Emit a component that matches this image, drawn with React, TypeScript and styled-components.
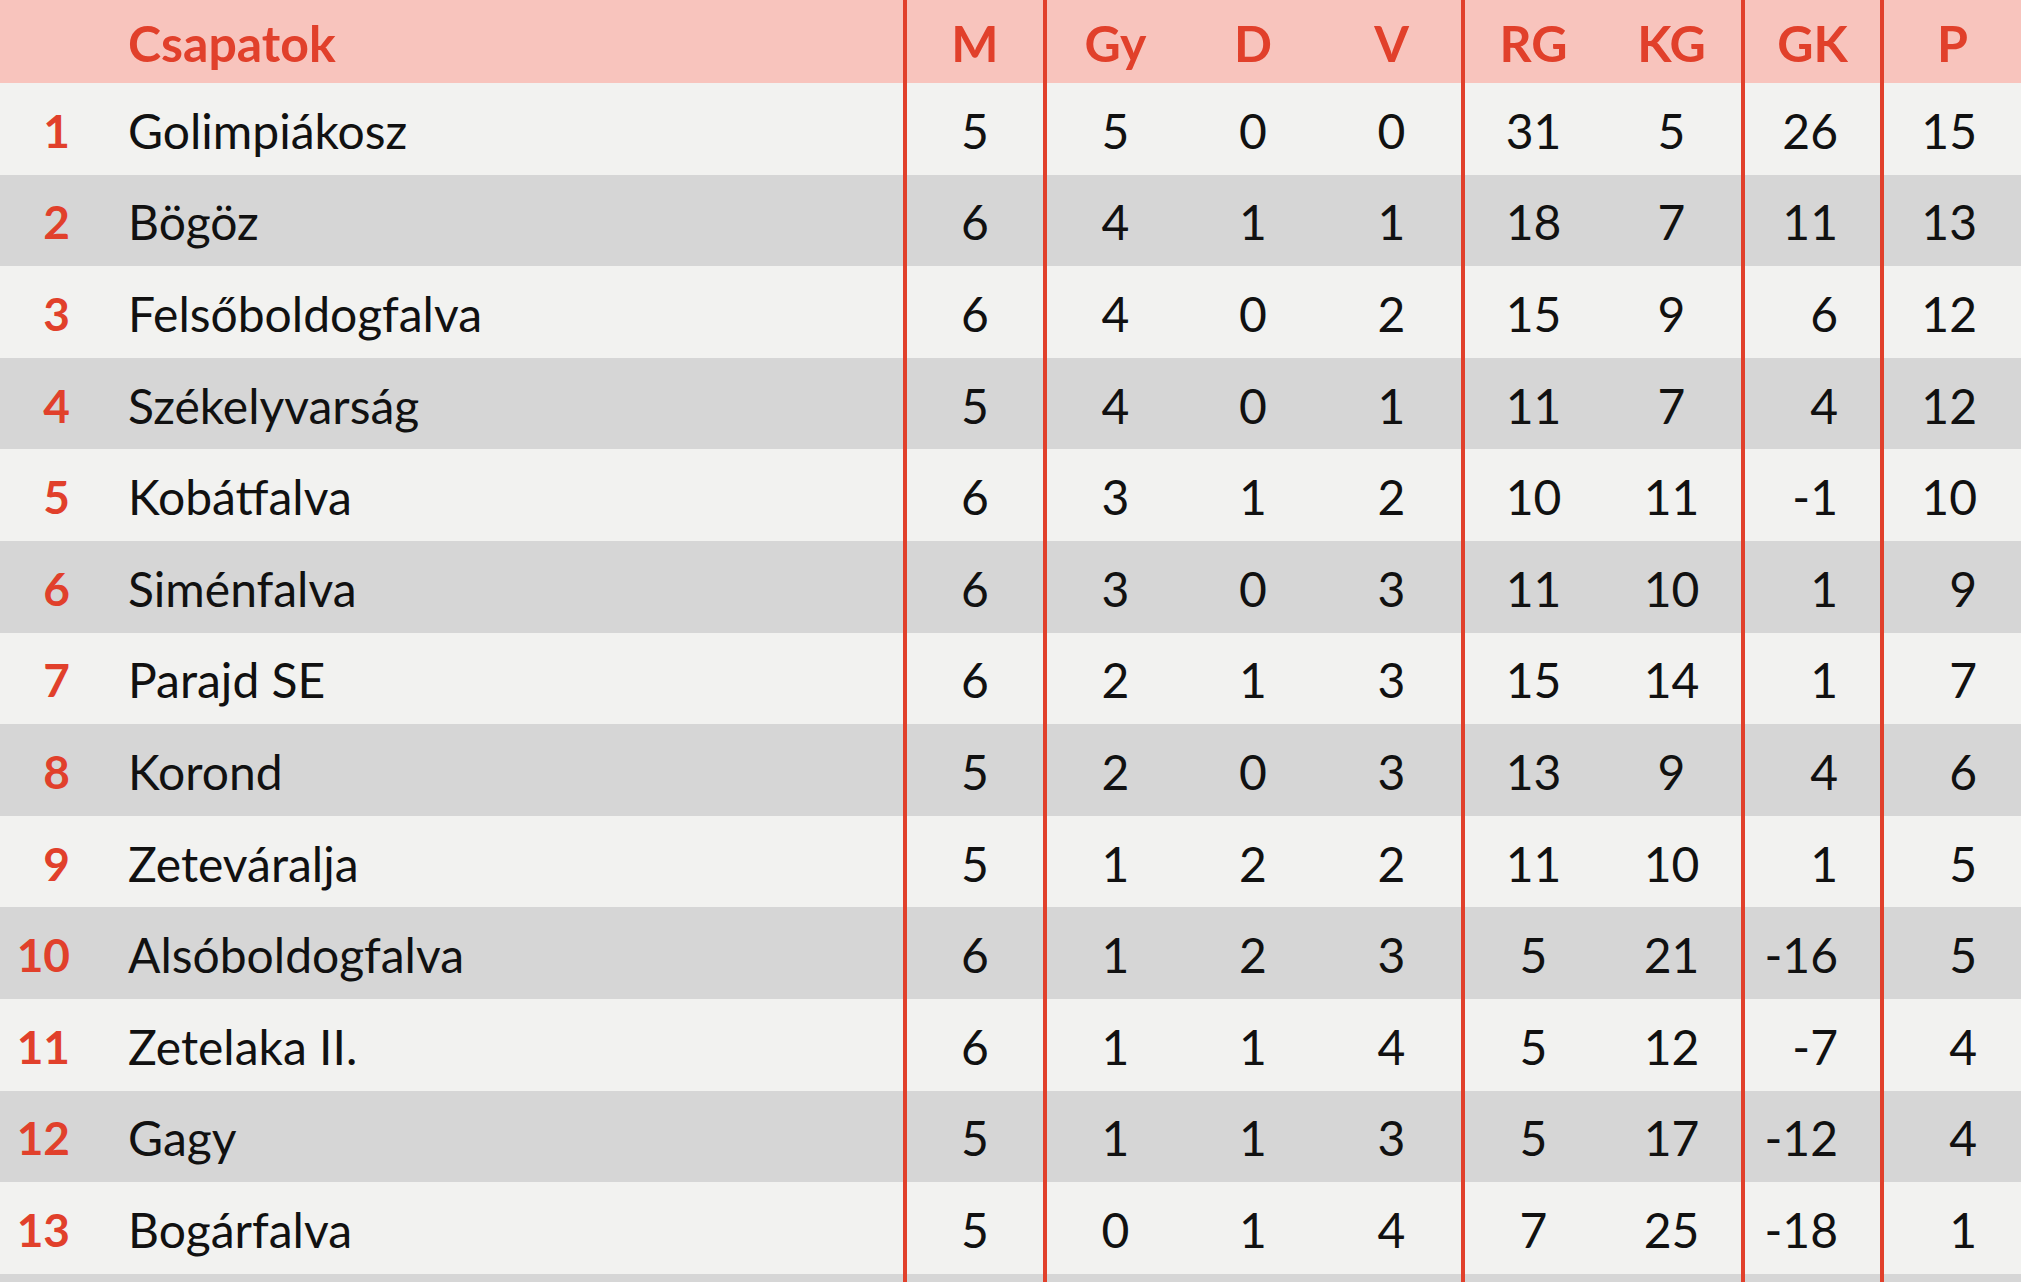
import React from 'react';
import styled, { createGlobalStyle } from 'styled-components';

interface TeamRow {
  rank: number;
  team: string;
  m: number;
  gy: number;
  d: number;
  v: number;
  rg: number;
  kg: number;
  gk: number;
  p: number;
}

const rows: TeamRow[] = [
  { rank: 1, team: 'Golimpiákosz', m: 5, gy: 5, d: 0, v: 0, rg: 31, kg: 5, gk: 26, p: 15 },
  { rank: 2, team: 'Bögöz', m: 6, gy: 4, d: 1, v: 1, rg: 18, kg: 7, gk: 11, p: 13 },
  { rank: 3, team: 'Felsőboldogfalva', m: 6, gy: 4, d: 0, v: 2, rg: 15, kg: 9, gk: 6, p: 12 },
  { rank: 4, team: 'Székelyvarság', m: 5, gy: 4, d: 0, v: 1, rg: 11, kg: 7, gk: 4, p: 12 },
  { rank: 5, team: 'Kobátfalva', m: 6, gy: 3, d: 1, v: 2, rg: 10, kg: 11, gk: -1, p: 10 },
  { rank: 6, team: 'Siménfalva', m: 6, gy: 3, d: 0, v: 3, rg: 11, kg: 10, gk: 1, p: 9 },
  { rank: 7, team: 'Parajd SE', m: 6, gy: 2, d: 1, v: 3, rg: 15, kg: 14, gk: 1, p: 7 },
  { rank: 8, team: 'Korond', m: 5, gy: 2, d: 0, v: 3, rg: 13, kg: 9, gk: 4, p: 6 },
  { rank: 9, team: 'Zeteváralja', m: 5, gy: 1, d: 2, v: 2, rg: 11, kg: 10, gk: 1, p: 5 },
  { rank: 10, team: 'Alsóboldogfalva', m: 6, gy: 1, d: 2, v: 3, rg: 5, kg: 21, gk: -16, p: 5 },
  { rank: 11, team: 'Zetelaka II.', m: 6, gy: 1, d: 1, v: 4, rg: 5, kg: 12, gk: -7, p: 4 },
  { rank: 12, team: 'Gagy', m: 5, gy: 1, d: 1, v: 3, rg: 5, kg: 17, gk: -12, p: 4 },
  { rank: 13, team: 'Bogárfalva', m: 5, gy: 0, d: 1, v: 4, rg: 7, kg: 25, gk: -18, p: 1 },
];

// widths include the red divider on the columns that start a group
const colWidths = [115, 788, 140, 141, 138, 139, 141, 139, 139, 141];

const RED = '#e1402b';

const GlobalStyle = createGlobalStyle`
  html, body {
    margin: 0;
    padding: 0;
    background: #f2f2f0;
    overflow: hidden;
  }
  body {
    font-family: Lato, "Noto Sans", sans-serif;
  }
`;

const Table = styled.table`
  width: 2021px;
  table-layout: fixed;
  border-collapse: separate;
  border-spacing: 0;
  font-family: Lato, "Noto Sans", sans-serif;
`;

const HeadRow = styled.tr`
  height: 83px;
  background: #f8c4bd;
`;

const BodyRow = styled.tr<{ $dark: boolean }>`
  height: 91.6px;
  background: ${(p) => (p.$dark ? '#d6d6d6' : '#f2f2f0')};

  td {
    padding-top: 3px;
  }
`;

const Th = styled.th<{ $divider?: boolean; $left?: boolean }>`
  padding: 2px 0 0;
  color: ${RED};
  font-size: 50px;
  font-weight: 700;
  text-align: ${(p) => (p.$left ? 'left' : 'center')};
  padding-left: ${(p) => (p.$left ? '13px' : '0')};
  border-left: ${(p) => (p.$divider ? `4px solid ${RED}` : 'none')};
  vertical-align: middle;
`;

const Rank = styled.td`
  padding: 0 45px 0 0;
  text-align: right;
  color: ${RED};
  font-size: 46px;
  font-weight: 700;
`;

const Team = styled.td`
  padding: 0 0 0 13px;
  color: #111;
  font-size: 48px;
  font-weight: 400;
  white-space: nowrap;
`;

const Num = styled.td<{ $divider?: boolean; $right?: number }>`
  padding: 0;
  padding-right: ${(p) => (p.$right ? `${p.$right}px` : '0')};
  color: #111;
  font-size: 48px;
  font-weight: 400;
  text-align: ${(p) => (p.$right ? 'right' : 'center')};
  border-left: ${(p) => (p.$divider ? `4px solid ${RED}` : 'none')};
`;

const App: React.FC = () => {
  return (
    <>
      <GlobalStyle />
      <Table>
        <colgroup>
          {colWidths.map((w, i) => (
            <col key={i} style={{ width: w }} />
          ))}
        </colgroup>
        <thead>
          <HeadRow>
            <Th />
            <Th $left>Csapatok</Th>
            <Th $divider>M</Th>
            <Th $divider>Gy</Th>
            <Th>D</Th>
            <Th>V</Th>
            <Th $divider>RG</Th>
            <Th>KG</Th>
            <Th $divider>GK</Th>
            <Th $divider>P</Th>
          </HeadRow>
        </thead>
        <tbody>
          {rows.map((r, i) => (
            <BodyRow key={r.rank} $dark={i % 2 === 1}>
              <Rank>{r.rank}</Rank>
              <Team>{r.team}</Team>
              <Num $divider>{r.m}</Num>
              <Num $divider>{r.gy}</Num>
              <Num>{r.d}</Num>
              <Num>{r.v}</Num>
              <Num $divider>{r.rg}</Num>
              <Num>{r.kg}</Num>
              <Num $divider $right={42}>{r.gk}</Num>
              <Num $divider $right={44}>{r.p}</Num>
            </BodyRow>
          ))}
          <BodyRow $dark>
            <Rank />
            <Team />
            <Num $divider />
            <Num $divider />
            <Num />
            <Num />
            <Num $divider />
            <Num />
            <Num $divider />
            <Num $divider />
          </BodyRow>
        </tbody>
      </Table>
    </>
  );
};

export default App;
